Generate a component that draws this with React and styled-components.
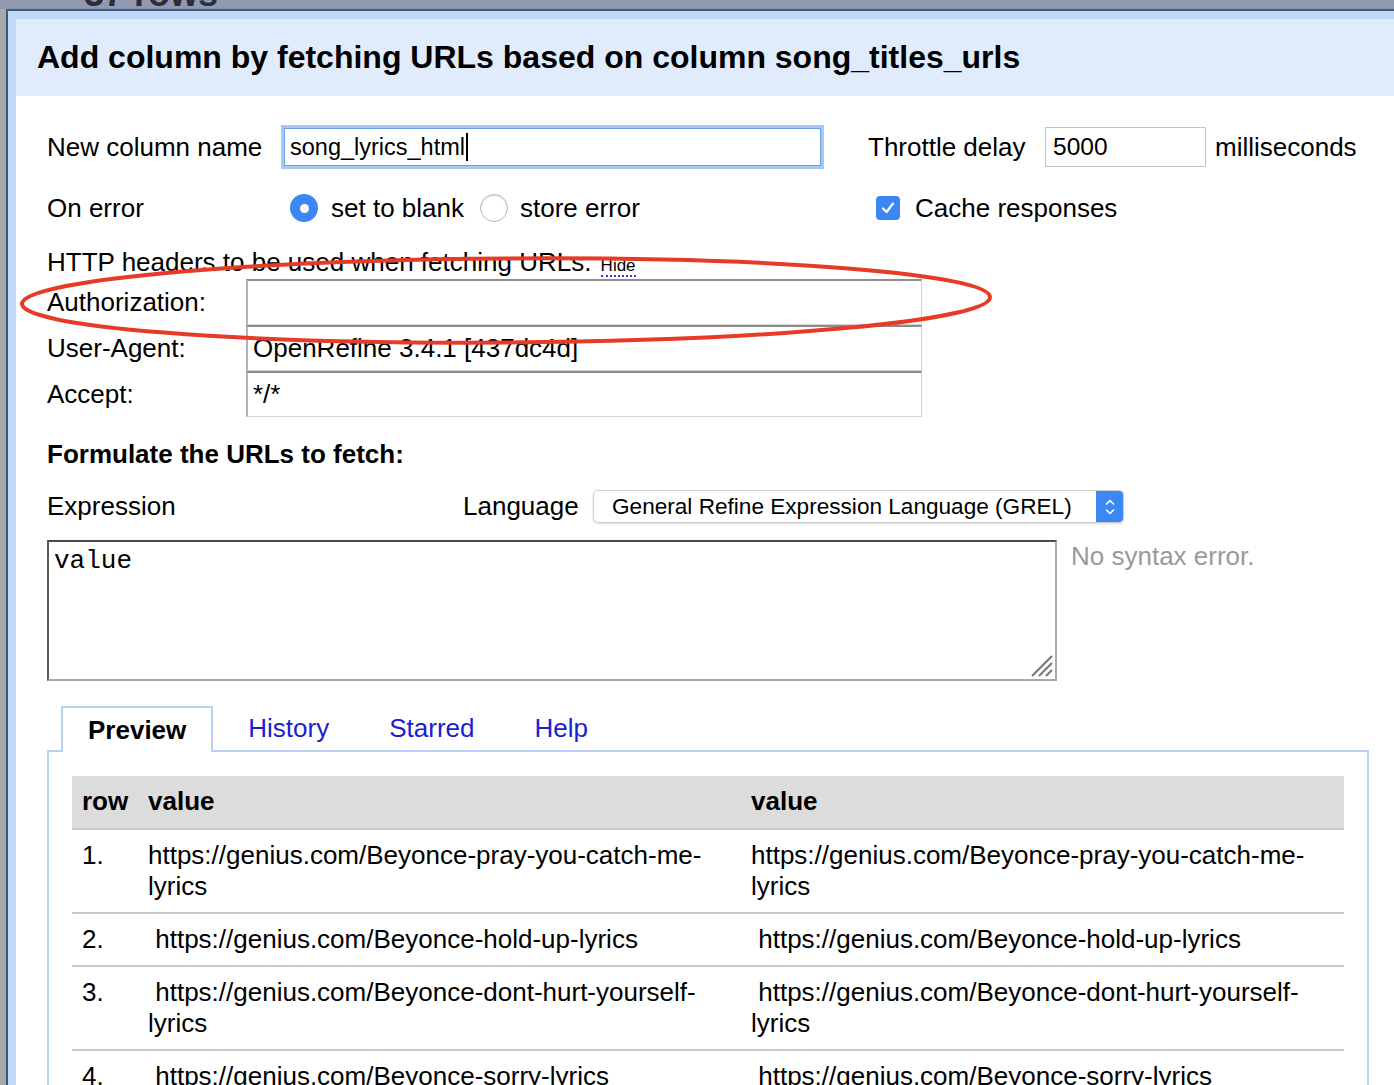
import React from 'react';
import styled, { createGlobalStyle } from 'styled-components';

const GlobalStyle = createGlobalStyle`
  html, body { margin: 0; padding: 0; }
  body {
    font-family: "Liberation Sans", Arial, sans-serif;
    color: #000;
    background: #a9a9a9;
  }
`;

const Page = styled.div`
  width: 100vw;
  height: 1085px;
  overflow: hidden;
  position: relative;
  background: #a9a9a9;
`;

const TopStrip = styled.div`
  height: 9px;
  background: #9199b1;
  overflow: hidden;
  padding-left: 84px;
`;

const BackText = styled.div`
  font-weight: bold;
  font-size: 36px;
  line-height: 36px;
  margin-top: -24px;
  color: #2a2f3a;
`;

const Dialog = styled.div`
  margin-left: 6px;
  width: 1500px;
  border-top: 2px solid #3d5a7a;
  border-left: 2px solid #3d5a7a;
`;

const DialogInner = styled.div`
  border-top: 8px solid #c1d8f9;
  border-left: 8px solid #c1d8f9;
  background: #fff;
  height: 1100px;
`;

const Header = styled.div`
  height: 77px;
  background: #e0ecfc;
  display: flex;
  align-items: center;
  padding-left: 21px;
  font-weight: bold;
  font-size: 32px;
`;

const Body = styled.div`
  padding-left: 31px;
  font-size: 26px;
  width: 1322px;
`;

const Row = styled.div`
  display: flex;
  align-items: ${p => p.$align || 'center'};
  height: ${p => p.$h}px;
  margin-top: ${p => p.$mt}px;
`;

const Label = styled.div`
  width: ${p => p.$w}px;
  flex: none;
  white-space: nowrap;
`;

const Gap = styled.div`
  width: ${p => p.$w}px;
  flex: none;
`;

const FocusField = styled.div`
  box-sizing: border-box;
  width: 543px;
  height: 44px;
  border: 3px solid #a6c8f3;
  box-shadow: inset 0 0 0 1px #6d9fe3;
  display: flex;
  align-items: center;
  padding-left: 6px;
  font-size: 23.5px;
`;

const Caret = styled.span`
  display: inline-block;
  width: 2px;
  height: 28px;
  background: #000;
  margin-left: 1px;
`;

const SmallField = styled.div`
  box-sizing: border-box;
  width: 161px;
  height: 40px;
  border: 1px solid #c4c4c4;
  display: flex;
  align-items: center;
  padding-left: 7px;
  font-size: 24.5px;
`;

const Radio = styled.span`
  box-sizing: border-box;
  width: 28px;
  height: 28px;
  border-radius: 50%;
  flex: none;
  display: flex;
  align-items: center;
  justify-content: center;
  background: ${p => (p.$on ? '#3d87f5' : '#fff')};
  border: ${p => (p.$on ? 'none' : '1px solid #b8b8b8')};
  box-shadow: ${p => (p.$on ? 'none' : 'inset 0 1px 2px rgba(0,0,0,0.12)')};
  &::after {
    content: '';
    display: ${p => (p.$on ? 'block' : 'none')};
    width: 9px;
    height: 9px;
    border-radius: 50%;
    background: #fff;
  }
`;

const Check = styled.span`
  width: 24px;
  height: 24px;
  border-radius: 4px;
  background: #3d87f5;
  flex: none;
  display: flex;
  align-items: center;
  justify-content: center;
`;

const TextLine = styled.div`
  height: 30px;
  line-height: 30px;
  margin-top: ${p => p.$mt}px;
  font-weight: ${p => (p.$bold ? 'bold' : 'normal')};
  white-space: nowrap;
`;

const HideLink = styled.span`
  display: inline-block;
  font-size: 17px;
  line-height: 18px;
  border-bottom: 2px dotted #3434e0;
  margin-left: 2px;
`;

const HeaderGrid = styled.div`
  margin-top: 2px;
  display: grid;
  grid-template-columns: 199px 676px;
  grid-auto-rows: 46px;
  align-items: center;
`;

const HeaderInput = styled.div`
  box-sizing: border-box;
  height: 46px;
  border: 1px solid #d2d2d2;
  border-top: 2px solid #8c8c8c;
  border-left: 2px solid #b4b4b4;
  padding-left: 5px;
  display: flex;
  align-items: center;
`;

const Select = styled.div`
  box-sizing: border-box;
  width: 531px;
  height: 33px;
  border: 1px solid #cdcdcd;
  border-radius: 5px;
  box-shadow: 0 1px 2px rgba(0, 0, 0, 0.15);
  display: flex;
  align-items: center;
  font-size: 22.6px;
  padding-left: 18px;
  overflow: hidden;
`;

const SelectText = styled.span`
  flex: 1;
  white-space: nowrap;
`;

const Stepper = styled.span`
  width: 27px;
  height: 100%;
  background: #3d87f5;
  display: flex;
  align-items: center;
  justify-content: center;
`;

const ExprBox = styled.div`
  position: relative;
  box-sizing: border-box;
  width: 1010px;
  height: 141px;
  border: 2px solid #a9a9a9;
  border-top-color: #4a4a4a;
  border-left-color: #5a5a5a;
  padding: 4px 5px;
  font-family: "Liberation Mono", "Courier New", monospace;
  font-size: 26px;
  line-height: 30px;
  flex: none;
`;

const Grip = styled.svg`
  position: absolute;
  right: 1px;
  bottom: 1px;
`;

const Status = styled.div`
  color: #9a9a9a;
  margin-left: 14px;
  margin-top: 1px;
  line-height: 30px;
  white-space: nowrap;
`;

const Tabs = styled.div`
  display: flex;
  align-items: flex-end;
  margin-top: 25px;
  padding-left: 14px;
  height: 44px;
`;

const Tab = styled.div`
  box-sizing: border-box;
  padding: 0 ${p => (p.$active ? '25px' : '30px')};
  margin-right: ${p => (p.$active ? '5px' : '0')};
  display: flex;
  align-items: center;
  white-space: nowrap;
  position: relative;
  z-index: 1;
  font-weight: ${p => (p.$active ? 'bold' : 'normal')};
  color: ${p => (p.$active ? '#000' : '#1c1cd2')};
  background: ${p => (p.$active ? '#fff' : 'transparent')};
  border: ${p => (p.$active ? '2px solid #b9cff4' : 'none')};
  border-bottom: none;
  margin-bottom: ${p => (p.$active ? '-2px' : '0')};
  height: ${p => (p.$active ? '46px' : '44px')};
`;

const Panel = styled.div`
  border: 2px solid #b9cff4;
  padding: 24px 0 0 23px;
  height: 400px;
`;

const Table = styled.table`
  width: 1272px;
  table-layout: fixed;
  border-collapse: collapse;
  font-size: 26px;
  line-height: 31px;
`;

const Th = styled.th`
  background: #dcdcdc;
  text-align: left;
  padding: 10px 10px 11px;
  font-weight: bold;
`;

const Td = styled.td`
  vertical-align: top;
  padding: 10px 10px;
  border-top: 2px solid #c9c9c9;
  white-space: pre-wrap;
`;

const Annotation = styled.svg`
  position: absolute;
  left: 0;
  top: 0;
  pointer-events: none;
`;

const rows = [
  ['1.', 'https://genius.com/Beyonce-pray-you-catch-me-lyrics'],
  ['2.', ' https://genius.com/Beyonce-hold-up-lyrics'],
  ['3.', ' https://genius.com/Beyonce-dont-hurt-yourself-lyrics'],
  ['4.', ' https://genius.com/Beyonce-sorry-lyrics'],
  ['5.', ' https://genius.com/Beyonce-6-inch-lyrics'],
];

const headers = [
  ['Authorization:', ''],
  ['User-Agent:', 'OpenRefine 3.4.1 [437dc4d]'],
  ['Accept:', '*/*'],
];

export default function App() {
  return (
    <Page>
      <GlobalStyle />
      <TopStrip>
        <BackText>37 rows</BackText>
      </TopStrip>
      <Dialog>
        <DialogInner>
          <Header>Add column by fetching URLs based on column song_titles_urls</Header>
          <Body>
            <Row $h={44} $mt={29}>
              <Label $w={234}>New column name</Label>
              <FocusField>
                song_lyrics_html<Caret />
              </FocusField>
              <Gap $w={44} />
              <Label $w={177}>Throttle delay</Label>
              <SmallField>5000</SmallField>
              <Gap $w={9} />
              <Label>milliseconds</Label>
            </Row>

            <Row $h={40} $mt={19}>
              <Label $w={243}>On error</Label>
              <Radio $on />
              <Gap $w={13} />
              <Label $w={149}>set to blank</Label>
              <Radio />
              <Gap $w={12} />
              <Label $w={356}>store error</Label>
              <Check>
                <svg width="16" height="16" viewBox="0 0 16 16">
                  <path d="M3 8.5 L6.5 12 L13 3.5" fill="none" stroke="#fff" strokeWidth="2.2" strokeLinecap="round" strokeLinejoin="round" />
                </svg>
              </Check>
              <Gap $w={15} />
              <Label>Cache responses</Label>
            </Row>

            <TextLine $mt={19}>
              HTTP headers to be used when fetching URLs. <HideLink>Hide</HideLink>
            </TextLine>

            <HeaderGrid>
              {headers.map(([name, val]) => (
                <React.Fragment key={name}>
                  <Label>{name}</Label>
                  <HeaderInput>{val}</HeaderInput>
                </React.Fragment>
              ))}
            </HeaderGrid>

            <TextLine $mt={22} $bold>Formulate the URLs to fetch:</TextLine>

            <Row $h={33} $mt={21}>
              <Label $w={416}>Expression</Label>
              <Label $w={130}>Language</Label>
              <Select>
                <SelectText>General Refine Expression Language (GREL)</SelectText>
                <Stepper>
                  <svg width="12" height="22" viewBox="0 0 12 22">
                    <path d="M2.5 8 L6 4.5 L9.5 8 M2.5 14 L6 17.5 L9.5 14" fill="none" stroke="#fff" strokeWidth="1.6" strokeLinecap="round" strokeLinejoin="round" />
                  </svg>
                </Stepper>
              </Select>
            </Row>

            <Row $h={141} $mt={17} $align="flex-start">
              <ExprBox>
                value
                <Grip width="26" height="26" viewBox="0 0 26 26">
                  <path d="M4 24 L24 4 M11 24 L24 11 M18 24 L24 18" stroke="#777" strokeWidth="2" />
                </Grip>
              </ExprBox>
              <Status>No syntax error.</Status>
            </Row>

            <Tabs>
              <Tab $active>Preview</Tab>
              <Tab>History</Tab>
              <Tab>Starred</Tab>
              <Tab>Help</Tab>
            </Tabs>
            <Panel>
              <Table>
                <colgroup>
                  <col style={{ width: 66 }} />
                  <col style={{ width: 603 }} />
                  <col style={{ width: 603 }} />
                </colgroup>
                <thead>
                  <tr>
                    <Th>row</Th>
                    <Th>value</Th>
                    <Th>value</Th>
                  </tr>
                </thead>
                <tbody>
                  {rows.map(([n, url]) => (
                    <tr key={n}>
                      <Td>{n}</Td>
                      <Td>{url}</Td>
                      <Td>{url}</Td>
                    </tr>
                  ))}
                </tbody>
              </Table>
            </Panel>
          </Body>
        </DialogInner>
      </Dialog>
      <Annotation width="1394" height="1085" viewBox="0 0 1394 1085">
        <ellipse cx="506" cy="300.5" rx="484" ry="42" fill="none" stroke="#e63b26" strokeWidth="4" transform="rotate(-0.4 506 300)" />
      </Annotation>
    </Page>
  );
}
